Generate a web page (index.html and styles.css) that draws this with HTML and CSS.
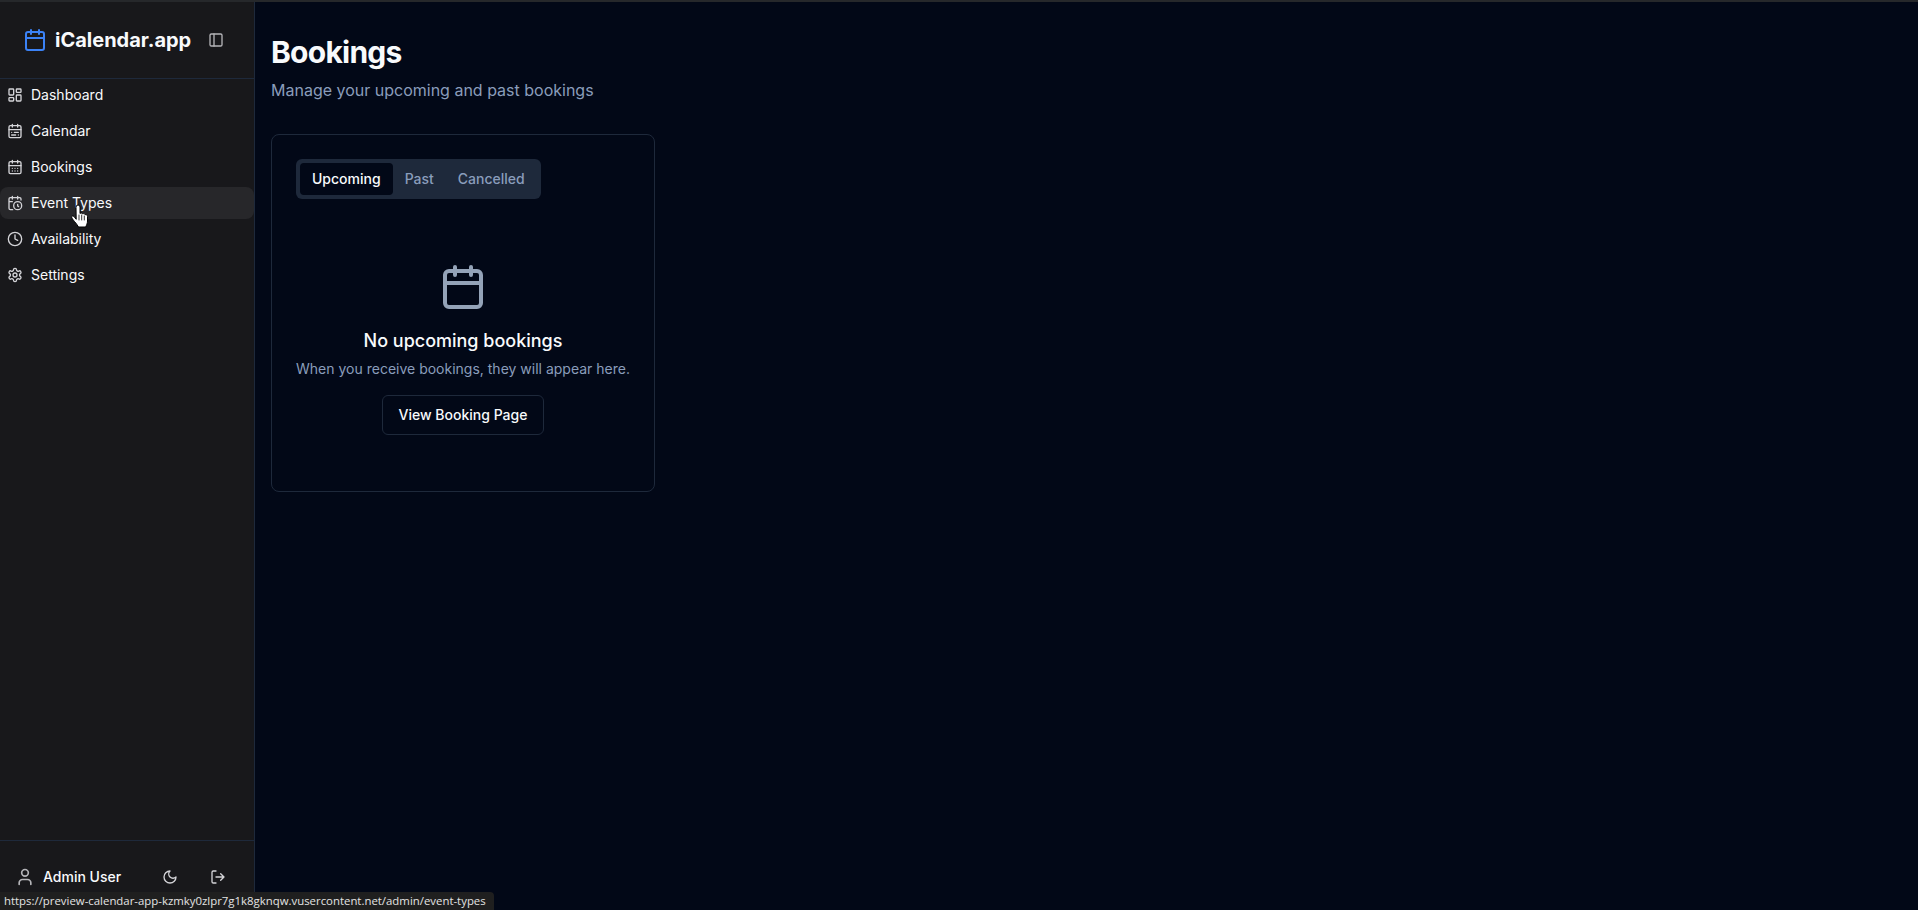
FILE: index.html
```html
<!DOCTYPE html>
<html lang="en">
<head>
  <meta charset="UTF-8">
  <title>Bookings</title>
  <link rel="stylesheet" href="styles.css">
</head>
<body>
  <div class="app">
    <aside class="sidebar">
      <div class="brand">
        <svg class="logo-icon" viewBox="0 0 24 24"><path d="M8 2v4M16 2v4M3 10h18"/><rect x="3" y="4" width="18" height="18" rx="2"/></svg>
        <span class="brand-name">iCalendar.app</span>
        <svg class="icon panel-toggle" viewBox="0 0 24 24"><rect x="3" y="3" width="18" height="18" rx="2"/><path d="M9 3v18"/></svg>
      </div>
      <nav class="nav">
        <a class="nav-item">
          <svg class="icon" viewBox="0 0 24 24"><rect x="3" y="3" width="7" height="9" rx="1"/><rect x="14" y="3" width="7" height="5" rx="1"/><rect x="14" y="12" width="7" height="9" rx="1"/><rect x="3" y="16" width="7" height="5" rx="1"/></svg>
          <span class="label">Dashboard</span>
        </a>
        <a class="nav-item">
          <svg class="icon" viewBox="0 0 24 24"><rect x="3" y="4" width="18" height="18" rx="2"/><path d="M16 2v4M3 10h18M8 2v4M17 14h-6M13 18H7M7 14h.01M17 18h.01"/></svg>
          <span class="label">Calendar</span>
        </a>
        <a class="nav-item">
          <svg class="icon" viewBox="0 0 24 24"><path d="M8 2v4M16 2v4"/><rect x="3" y="4" width="18" height="18" rx="2"/><path d="M3 10h18M8 14h.01M12 14h.01M16 14h.01M8 18h.01M12 18h.01M16 18h.01"/></svg>
          <span class="label">Bookings</span>
        </a>
        <a class="nav-item hovered">
          <svg class="icon" viewBox="0 0 24 24"><path d="M21 7.5V6a2 2 0 0 0-2-2H5a2 2 0 0 0-2 2v14a2 2 0 0 0 2 2h3.5M16 2v4M8 2v4M3 10h5M17.5 17.5 16 16.3V14"/><circle cx="16" cy="16" r="6"/></svg>
          <span class="label">Event Types</span>
        </a>
        <a class="nav-item">
          <svg class="icon" viewBox="0 0 24 24"><circle cx="12" cy="12" r="10"/><path d="M12 6v6l4 2"/></svg>
          <span class="label">Availability</span>
        </a>
        <a class="nav-item">
          <svg class="icon" viewBox="0 0 24 24"><path d="M12.22 2h-.44a2 2 0 0 0-2 2v.18a2 2 0 0 1-1 1.73l-.43.25a2 2 0 0 1-2 0l-.15-.08a2 2 0 0 0-2.73.73l-.22.38a2 2 0 0 0 .73 2.73l.15.1a2 2 0 0 1 1 1.72v.51a2 2 0 0 1-1 1.74l-.15.09a2 2 0 0 0-.73 2.73l.22.38a2 2 0 0 0 2.73.73l.15-.08a2 2 0 0 1 2 0l.43.25a2 2 0 0 1 1 1.73V20a2 2 0 0 0 2 2h.44a2 2 0 0 0 2-2v-.18a2 2 0 0 1 1-1.73l.43-.25a2 2 0 0 1 2 0l.15.08a2 2 0 0 0 2.73-.73l.22-.39a2 2 0 0 0-.73-2.73l-.15-.08a2 2 0 0 1-1-1.74v-.5a2 2 0 0 1 1-1.74l.15-.09a2 2 0 0 0 .73-2.73l-.22-.38a2 2 0 0 0-2.73-.73l-.15.08a2 2 0 0 1-2 0l-.43-.25a2 2 0 0 1-1-1.73V4a2 2 0 0 0-2-2z"/><circle cx="12" cy="12" r="3"/></svg>
          <span class="label">Settings</span>
        </a>
      </nav>
      <div class="sidebar-footer">
        <div class="user">
          <svg class="user-icon" viewBox="0 0 24 24"><path d="M19 21v-2a4 4 0 0 0-4-4H9a4 4 0 0 0-4 4v2"/><circle cx="12" cy="7" r="4"/></svg>
          <span class="label">Admin User</span>
        </div>
        <div class="footer-actions">
          <button class="icon-btn"><svg class="icon" viewBox="0 0 24 24"><path d="M12 3a6 6 0 0 0 9 9 9 9 0 1 1-9-9Z"/></svg></button>
          <button class="icon-btn"><svg class="icon" viewBox="0 0 24 24"><path d="M9 21H5a2 2 0 0 1-2-2V5a2 2 0 0 1 2-2h4M16 17l5-5-5-5M21 12H9"/></svg></button>
        </div>
      </div>
    </aside>
    <main class="main">
      <h1>Bookings</h1>
      <p class="subtitle">Manage your upcoming and past bookings</p>
      <section class="card">
        <div class="tabs">
          <button class="tab active">Upcoming</button>
          <button class="tab">Past</button>
          <button class="tab">Cancelled</button>
        </div>
        <div class="empty">
          <svg class="empty-icon" viewBox="0 0 24 24"><path d="M8 2v4M16 2v4M3 10h18"/><rect x="3" y="4" width="18" height="18" rx="2"/></svg>
          <h3>No upcoming bookings</h3>
          <p>When you receive bookings, they will appear here.</p>
          <button class="outline-btn">View Booking Page</button>
        </div>
      </section>
    </main>
  </div>
  <svg class="cursor" viewBox="0 0 17 24"><path d="M5 3a2 2 0 0 1 4 0v6.500c1-.8 2.300-.5 2.700.4 1-.6 2.200-.2 2.500.8 1-.4 2.300.3 2.300 1.800v4.500c0 2.500-1 4-1.800 6H7.500c-1-2-2.500-3.600-4-5.500-1-1.300-2.500-3-2.800-4.200-.2-1.300 1.300-1.800 2.300-.8L5 15z"/><path class="cursor-lines" d="M8 11v5M10.700 11v5M13.300 12v4"/></svg>
  <div class="status-bubble">https://preview-calendar-app-kzmky0zlpr7g1k8gknqw.vusercontent.net/admin/event-types</div>
</body>
</html>
```
FILE: styles.css
```css
* {
  box-sizing: border-box;
}
body {
  margin: 0;
  height: 910px;
  overflow: hidden;
  background: #020817;
  color: #f8fafc;
  font-family: 'Inter', sans-serif;
  font-size: 14px;
}
svg {
  display: block;
  flex: none;
  fill: none;
  stroke: currentColor;
  stroke-width: 2;
  stroke-linecap: round;
  stroke-linejoin: round;
}
.icon {
  width: 16px;
  height: 16px;
}
.app {
  display: flex;
  height: 100%;
  border-top: 2px solid #26282b;
}
.sidebar {
  width: 255px;
  flex: none;
  display: flex;
  flex-direction: column;
  background: #18181b;
  border-right: 1px solid #1e293b;
}
.brand {
  height: 77px;
  display: flex;
  align-items: center;
  padding: 0 0 0 23px;
  border-bottom: 1px solid #1e293b;
}
.logo-icon {
  width: 24px;
  height: 24px;
  color: #3b82f6;
}
.brand-name {
  margin-left: 8px;
  font-size: 20px;
  font-weight: 700;
  white-space: nowrap;
}
.panel-toggle {
  margin-left: 17px;
  color: #b4b4b8;
}
.nav {
  flex: 1;
  display: flex;
  flex-direction: column;
  gap: 4px;
}
.nav-item {
  display: flex;
  align-items: center;
  gap: 8px;
  height: 32px;
  padding-left: 7px;
  border-radius: 8px;
  color: #f8fafc;
}
.nav-item .icon {
  color: #d4d4d8;
}
.nav-item.hovered {
  background: #27272a;
}
.label {
  padding-bottom: 2px;
}
.sidebar-footer {
  height: 70px;
  display: flex;
  justify-content: space-between;
  padding: 26px 16px 0 15px;
  border-top: 1px solid #1e293b;
}
.user {
  display: flex;
  align-items: center;
  height: 20px;
  gap: 8px;
  font-weight: 500;
}
.user-icon {
  width: 20px;
  height: 20px;
  color: #b4b4b8;
}
.footer-actions {
  display: flex;
  gap: 8px;
}
.icon-btn {
  width: 40px;
  height: 20px;
  padding: 0;
  display: flex;
  align-items: center;
  justify-content: center;
  background: none;
  border: none;
  color: #d4d4d8;
}
.main {
  flex: 1;
  padding: 32px 16px;
}
h1 {
  margin: 0 0 8px;
  font-size: 30px;
  line-height: 36px;
  font-weight: 700;
  letter-spacing: -0.75px;
}
.subtitle {
  margin: 0 0 32px;
  font-size: 16px;
  line-height: 24px;
  color: #8a9dbb;
}
.card {
  width: 384px;
  height: 358px;
  padding: 24px;
  border: 1px solid #1e293b;
  border-radius: 8px;
}
.tabs {
  display: inline-flex;
  padding: 4px;
  background: #1e293b;
  border-radius: 6px;
}
.tab {
  height: 32px;
  padding: 0 12px 1px;
  border: none;
  border-radius: 4px;
  background: none;
  color: #8a9dbb;
  font: 500 14px 'Inter', sans-serif;
}
.tab.active {
  background: #020817;
  color: #f8fafc;
}
.empty {
  display: flex;
  flex-direction: column;
  align-items: center;
  padding-top: 64px;
}
.empty-icon {
  width: 48px;
  height: 48px;
  margin-bottom: 16px;
  color: #94a3b8;
}
.empty h3 {
  margin: 0 0 4px;
  font-size: 18px;
  line-height: 28px;
  font-weight: 500;
}
.empty p {
  margin: 0 0 16px;
  line-height: 20px;
  color: #8a9dbb;
  white-space: nowrap;
}
.outline-btn {
  height: 40px;
  padding: 0 16px 1px;
  border: 1px solid #1e293b;
  border-radius: 6px;
  background: #020817;
  color: #f8fafc;
  font: 500 14px 'Inter', sans-serif;
}
.cursor {
  position: absolute;
  left: 71px;
  top: 204px;
  width: 17px;
  height: 24px;
  fill: #fff;
  stroke: #000;
  stroke-width: 1;
}
.cursor-lines {
  fill: none;
  stroke-width: .8;
}
.status-bubble {
  position: absolute;
  left: 0;
  bottom: 0;
  height: 18px;
  width: 494px;
  padding-left: 4px;
  background: #1f1f1f;
  border-top-right-radius: 4px;
  color: #e3e3e3;
  font: 11.4px/18px 'Open Sans', sans-serif;
  white-space: nowrap;
}
```
